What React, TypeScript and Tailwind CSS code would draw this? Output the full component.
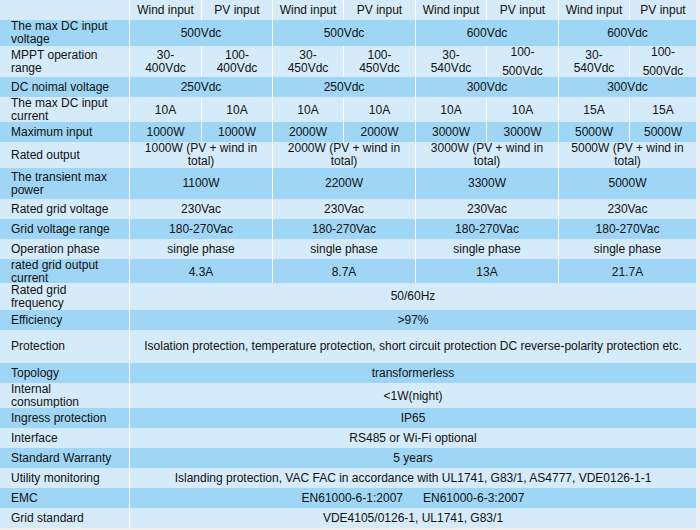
type Cell = { text: string; span: 1 | 2 | 8; tall?: boolean };
type Row = { label: string; h: string; tone: 'light' | 'blue'; cells: Cell[] };

const spanClass = { 1: 'col-span-1', 2: 'col-span-2', 8: 'col-span-8' };

const four = (a: string, b: string, c: string, d: string): Cell[] => [
    { text: a, span: 2 },
    { text: b, span: 2 },
    { text: c, span: 2 },
    { text: d, span: 2 },
];

const eight = (...v: string[]): Cell[] => v.map((text) => ({ text, span: 1 as const }));

const full = (text: string): Cell[] => [{ text, span: 8 }];

const rows: Row[] = [
    { label: '', h: 'h-[20px]', tone: 'light', cells: eight('Wind input', 'PV input', 'Wind input', 'PV input', 'Wind input', 'PV input', 'Wind input', 'PV input') },
    { label: 'The max DC input\nvoltage', h: 'h-[26px]', tone: 'blue', cells: four('500Vdc', '500Vdc', '600Vdc', '600Vdc') },
    {
        label: 'MPPT operation\nrange',
        h: 'h-[31px]',
        tone: 'light',
        cells: [
            { text: '30-\n400Vdc', span: 1 },
            { text: '100-\n400Vdc', span: 1 },
            { text: '30-\n450Vdc', span: 1 },
            { text: '100-\n450Vdc', span: 1 },
            { text: '30-\n540Vdc', span: 1 },
            { text: '100-\n500Vdc', span: 1, tall: true },
            { text: '30-\n540Vdc', span: 1 },
            { text: '100-\n500Vdc', span: 1, tall: true },
        ],
    },
    { label: 'DC noimal voltage', h: 'h-[20px]', tone: 'blue', cells: four('250Vdc', '250Vdc', '300Vdc', '300Vdc') },
    { label: 'The max DC input\ncurrent', h: 'h-[25px]', tone: 'light', cells: eight('10A', '10A', '10A', '10A', '10A', '10A', '15A', '15A') },
    { label: 'Maximum input', h: 'h-[20px]', tone: 'blue', cells: eight('1000W', '1000W', '2000W', '2000W', '3000W', '3000W', '5000W', '5000W') },
    {
        label: 'Rated output',
        h: 'h-[26px]',
        tone: 'light',
        cells: four(
            '1000W (PV + wind in\ntotal)',
            '2000W (PV + wind in\ntotal)',
            '3000W (PV + wind in\ntotal)',
            '5000W (PV + wind in\ntotal)'
        ),
    },
    { label: 'The transient max\npower', h: 'h-[31px]', tone: 'blue', cells: four('1100W', '2200W', '3300W', '5000W') },
    { label: 'Rated grid voltage', h: 'h-[20px]', tone: 'light', cells: four('230Vac', '230Vac', '230Vac', '230Vac') },
    { label: 'Grid voltage range', h: 'h-[20px]', tone: 'blue', cells: four('180-270Vac', '180-270Vac', '180-270Vac', '180-270Vac') },
    { label: 'Operation phase', h: 'h-[20px]', tone: 'light', cells: four('single phase', 'single phase', 'single phase', 'single phase') },
    { label: 'rated grid output\ncurrent', h: 'h-[24px]', tone: 'blue', cells: four('4.3A', '8.7A', '13A', '21.7A') },
    { label: 'Rated grid\nfrequency', h: 'h-[27px]', tone: 'light', cells: full('50/60Hz') },
    { label: 'Efficiency', h: 'h-[20px]', tone: 'blue', cells: full('>97%') },
    {
        label: 'Protection',
        h: 'h-[33px]',
        tone: 'light',
        cells: full('Isolation protection, temperature protection, short circuit protection DC reverse-polarity protection etc.'),
    },
    { label: 'Topology', h: 'h-[20px]', tone: 'blue', cells: full('transformerless') },
    { label: 'Internal\nconsumption', h: 'h-[25px]', tone: 'light', cells: full('<1W(night)') },
    { label: 'Ingress protection', h: 'h-[20px]', tone: 'blue', cells: full('IP65') },
    { label: 'Interface', h: 'h-[20px]', tone: 'light', cells: full('RS485 or Wi-Fi optional') },
    { label: 'Standard Warranty', h: 'h-[20px]', tone: 'blue', cells: full('5 years') },
    {
        label: 'Utility monitoring',
        h: 'h-[20px]',
        tone: 'light',
        cells: full('Islanding protection, VAC FAC in accordance with UL1741, G83/1, AS4777, VDE0126-1-1'),
    },
    { label: 'EMC', h: 'h-[20px]', tone: 'blue', cells: full('EN61000-6-1:2007      EN61000-6-3:2007') },
    { label: 'Grid standard', h: 'h-[20px]', tone: 'light', cells: full('VDE4105/0126-1, UL1741, G83/1') },
];

const App = () => {
    return (
        <div className="w-[700px] h-[530px] bg-[#efefef] overflow-hidden font-[family-name:Liberation_Sans,Arial,sans-serif] text-[12px] text-[#111111]">
            <div className="w-[696px] flex flex-col">
                {rows.map((row, i) => (
                    <div
                        key={i}
                        className={`grid grid-cols-[129px_72px_71px_71px_72px_71px_72px_71px_67px] ${row.h} ${
                            row.tone === 'blue' ? 'bg-[#9fd6f5]' : 'bg-[#d5ebf9]'
                        }`}
                    >
                        <div className="flex items-center pl-[11px] whitespace-pre-line leading-[13px]">{row.label}</div>
                        {row.cells.map((cell, j) => (
                            <div
                                key={j}
                                className={`${spanClass[cell.span]} flex flex-col items-center justify-center border-l border-white text-center whitespace-pre leading-[13px] ${
                                    cell.tall ? 'gap-[6px]' : 'gap-0'
                                }`}
                            >
                                {cell.text.split('\n').map((line, k) => (
                                    <span key={k}>{line}</span>
                                ))}
                            </div>
                        ))}
                    </div>
                ))}
            </div>
        </div>
    );
};

export default App;
